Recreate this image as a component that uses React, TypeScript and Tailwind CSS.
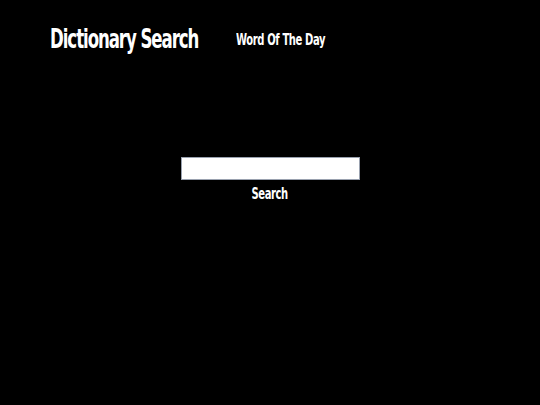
export default function App() {
  const font = { fontFamily: '"DejaVu Sans Condensed", "DejaVu Sans", sans-serif' };
  return (
    <div className="min-h-screen w-full bg-black text-white" style={font}>
      <header className="flex items-start pl-[50px] pt-[24px]">
        <h1 className="text-[26px] leading-[30px] font-bold tracking-[-1.5px] origin-left scale-x-[0.71]">
          Dictionary Search
        </h1>
        <a className="ml-[-23px] mt-[6px] text-[15px] leading-[20px] font-bold tracking-[-0.5px] origin-left scale-x-[0.74] cursor-pointer">
          Word Of The Day
        </a>
      </header>
      <main className="flex flex-col items-center pt-[103px]">
        <input
          type="text"
          className="w-[179px] h-[23px] bg-white border border-gray-400 text-black outline-none px-1"
        />
        <button className="mt-[5px] text-[15px] leading-[18px] font-bold tracking-[-0.5px] scale-x-[0.74]">
          Search
        </button>
      </main>
    </div>
  );
}
